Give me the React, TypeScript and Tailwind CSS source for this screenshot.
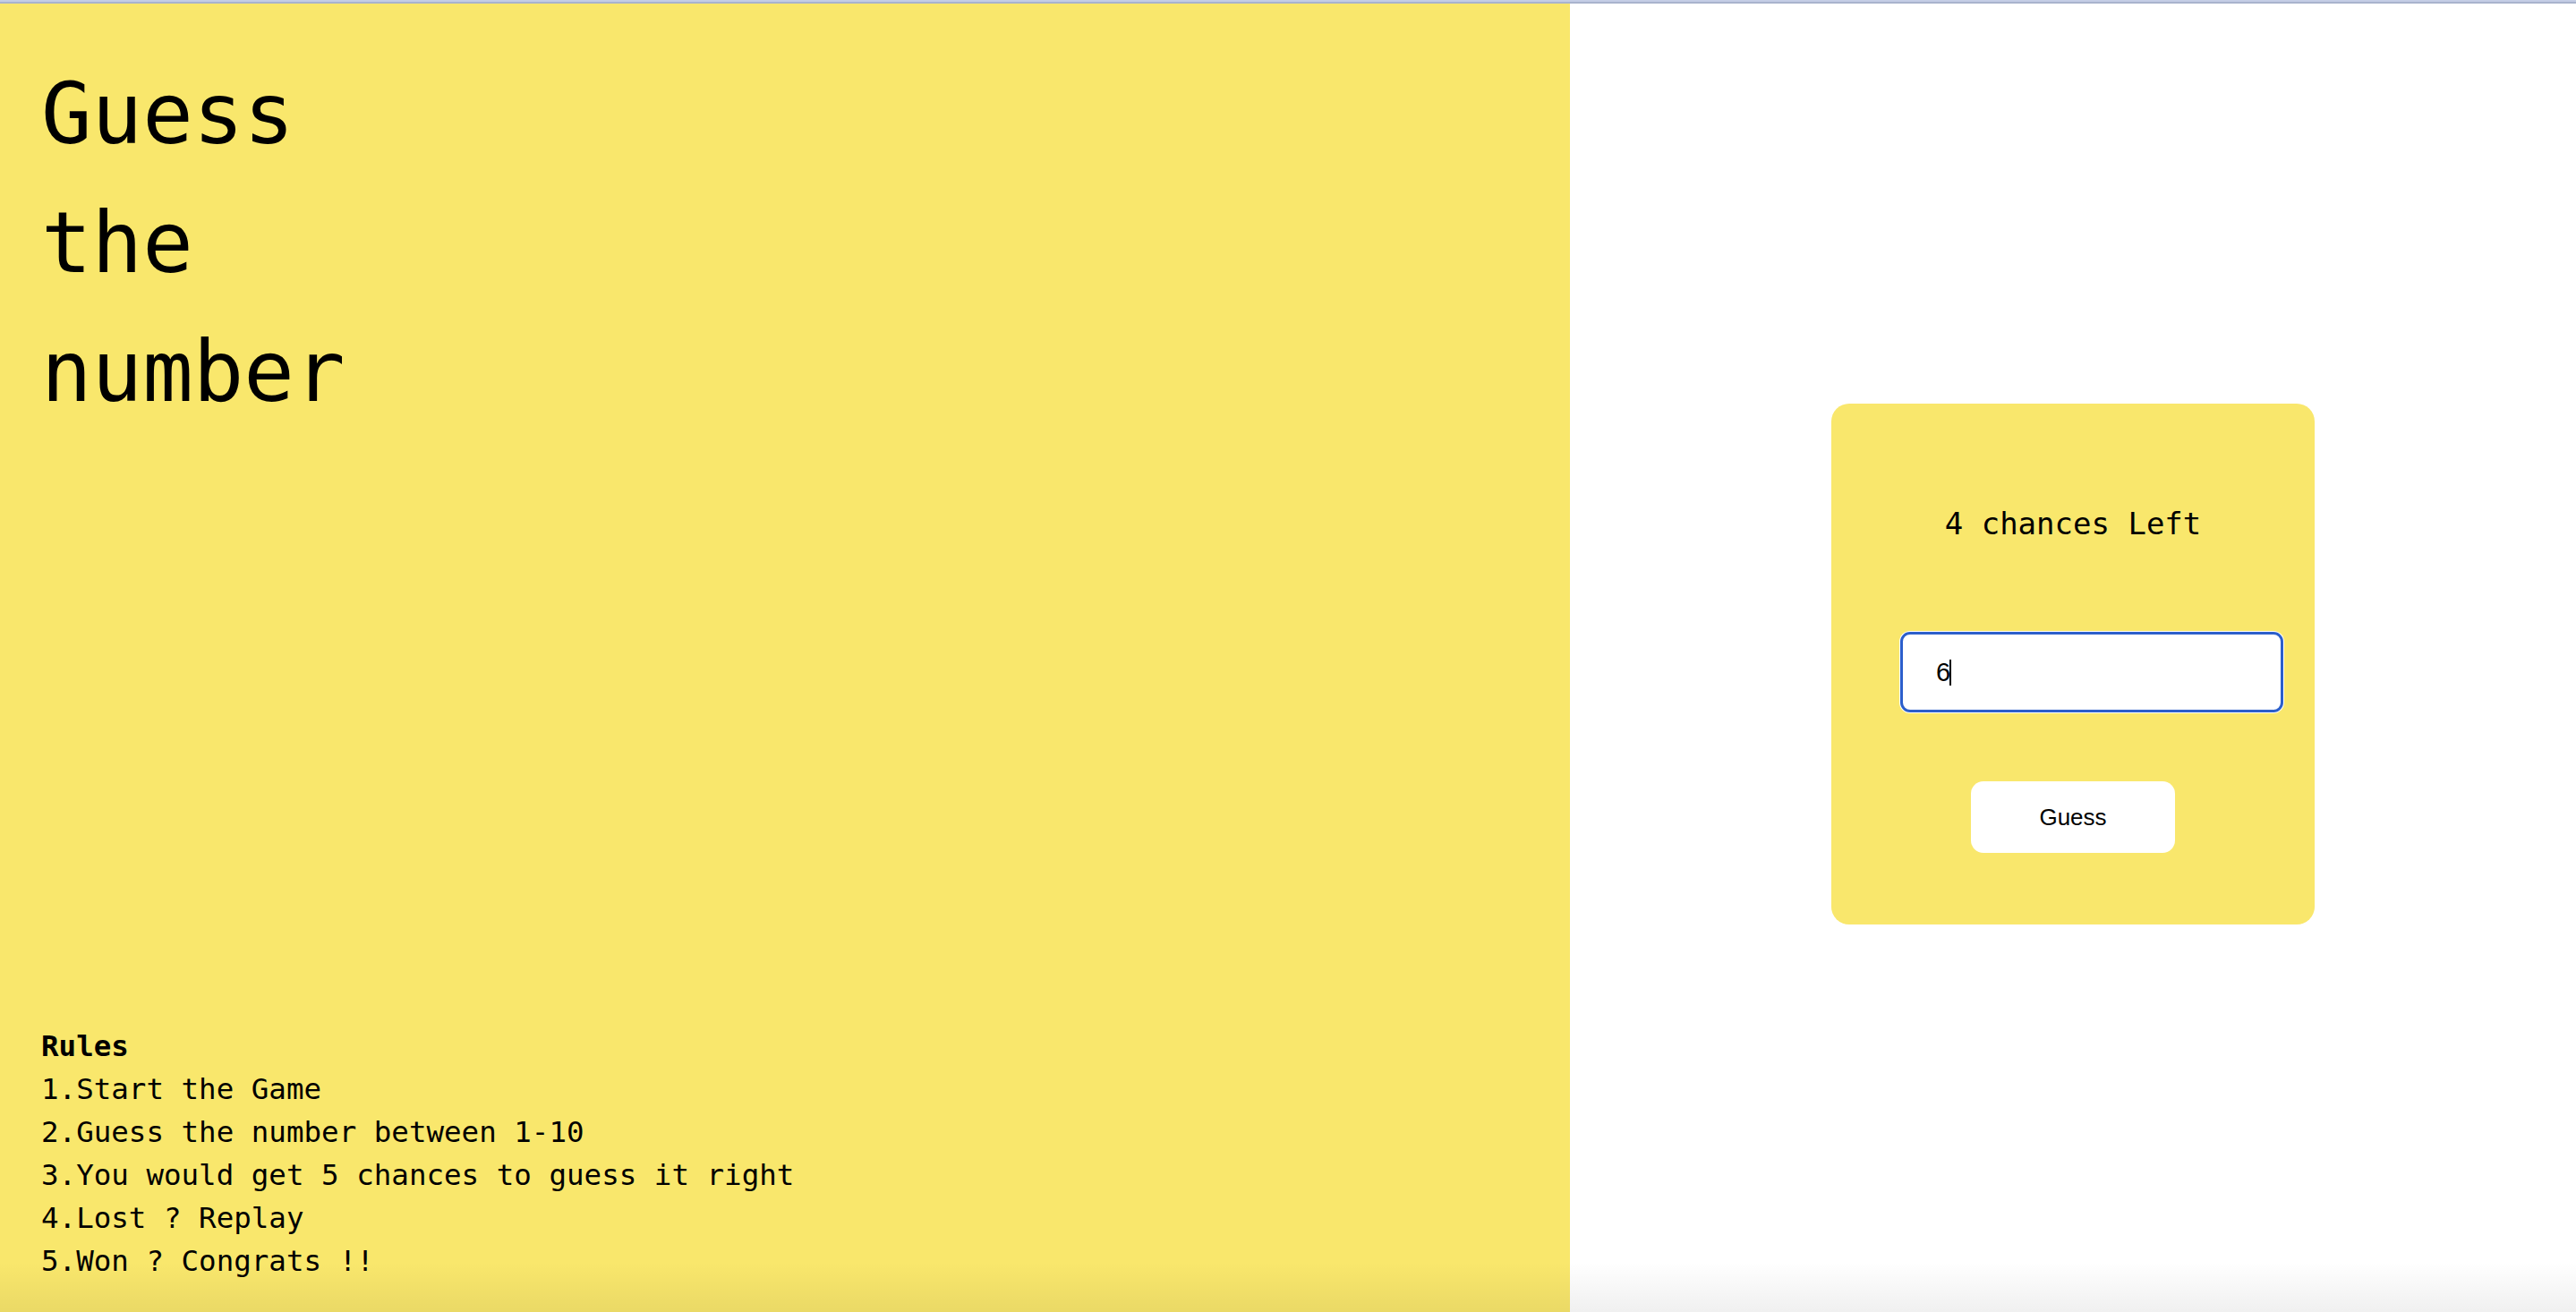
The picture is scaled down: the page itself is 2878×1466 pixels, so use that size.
import { useState } from 'react';

const mono = 'font-["DejaVu_Sans_Mono","Liberation_Mono",monospace]';

const rules = [
  '1.Start the Game',
  '2.Guess the number between 1-10',
  '3.You would get 5 chances to guess it right',
  '4.Lost ? Replay',
  '5.Won ? Congrats !!',
];

export default function App() {
  const [guess, setGuess] = useState('6');
  const [chances] = useState(4);

  return (
    <div className="relative flex h-[1466px] w-full flex-col overflow-hidden bg-white text-black">
      {/* window top edge */}
      <div className="h-[2px] w-full bg-[#c4cde5]" />
      <div className="h-[2px] w-full bg-[#a9b3cd]" />

      <div className="flex min-h-0 flex-1">
        {/* Left: title + rules */}
        <div className={`flex w-[1754px] flex-col justify-between bg-[#f9e76c] pt-[52px] pb-[33px] pl-[46px] ${mono}`}>
          <h1 className="text-[94px] leading-[144px] font-normal">
            <span className="block">Guess</span>
            <span className="block">the</span>
            <span className="block">number</span>
          </h1>

          <div className="text-[32.5px] leading-[48px]">
            <p className="font-bold">Rules</p>
            {rules.map((r) => (
              <p key={r}>{r}</p>
            ))}
          </div>
        </div>

        {/* Right: game card */}
        <div className="flex flex-1 items-center justify-center pt-[14px]">
          <div className="flex w-[540px] flex-col items-center rounded-[20px] bg-[#f9e76c] pt-[114px] pb-[80px]">
            <p className={`text-[34px] leading-[40px] ${mono}`}>{chances} chances Left</p>

            <div className="relative mt-[101px] ml-[42px]">
              <input
                type="text"
                value={guess}
                onChange={(e) => setGuess(e.target.value)}
                className="h-[90px] w-[428px] rounded-[11px] border-[3.5px] border-[#2c5fcb] bg-white pl-[37px] font-['Liberation_Sans',Arial,sans-serif] text-[29px] caret-transparent shadow-[0_0_0_1px_#ffffff] outline-none"
              />
              <span className="pointer-events-none absolute top-[31px] left-[55px] h-[29px] w-[2px] bg-black" />
            </div>

            <button className="mt-[77px] h-[80px] w-[228px] rounded-[14px] bg-white font-['Liberation_Sans',Arial,sans-serif] text-[26px]">
              Guess
            </button>
          </div>
        </div>
      </div>

      {/* soft shadow at the bottom of the window */}
      <div className="pointer-events-none absolute right-0 bottom-0 left-0 h-[56px] bg-gradient-to-b from-transparent to-black/[0.06]" />
    </div>
  );
}
